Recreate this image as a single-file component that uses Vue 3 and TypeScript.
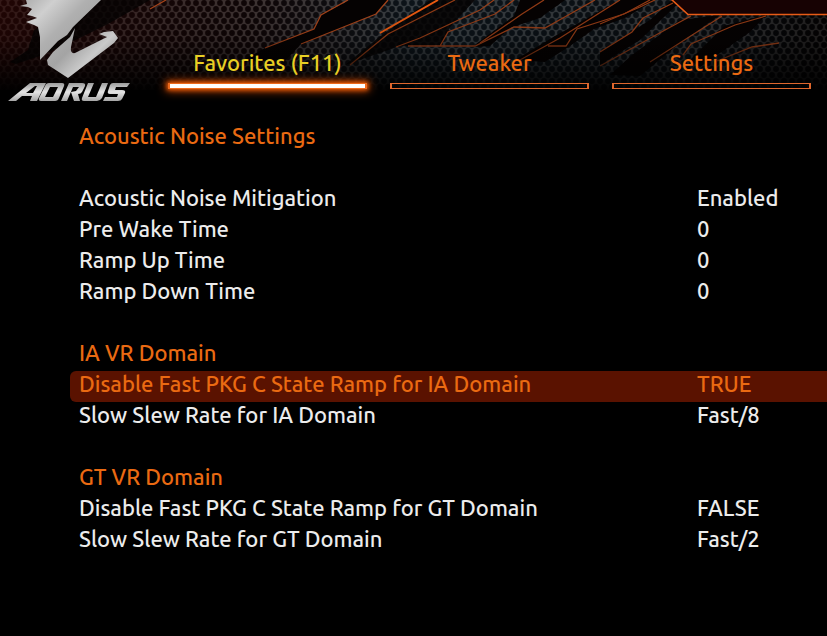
<script setup lang="ts">
import { ref } from 'vue'

interface Setting { label: string; value: string }
interface Group { title: string; spaced: boolean; items: Setting[] }

const tabs: string[] = ['Favorites (F11)', 'Tweaker', 'Settings']
const activeTab = ref<number>(0)
const selected = ref<string>('Disable Fast PKG C State Ramp for IA Domain')

const groups: Group[] = [
  {
    title: 'Acoustic Noise Settings',
    spaced: true,
    items: [
      { label: 'Acoustic Noise Mitigation', value: 'Enabled' },
      { label: 'Pre Wake Time', value: '0' },
      { label: 'Ramp Up Time', value: '0' },
      { label: 'Ramp Down Time', value: '0' },
    ],
  },
  {
    title: 'IA VR Domain',
    spaced: false,
    items: [
      { label: 'Disable Fast PKG C State Ramp for IA Domain', value: 'TRUE' },
      { label: 'Slow Slew Rate for IA Domain', value: 'Fast/8' },
    ],
  },
  {
    title: 'GT VR Domain',
    spaced: false,
    items: [
      { label: 'Disable Fast PKG C State Ramp for GT Domain', value: 'FALSE' },
      { label: 'Slow Slew Rate for GT Domain', value: 'Fast/2' },
    ],
  },
]
</script>

<template>
  <div class="bios">
    <header class="top">
      <svg class="backdrop" viewBox="0 0 827 90" preserveAspectRatio="xMidYMin slice" aria-hidden="true">
        <defs>
          <pattern id="mesh" width="8" height="12" patternUnits="userSpaceOnUse">
            <rect width="8" height="12" fill="#4a4443" />
            <g fill="#080405">
              <circle cx="4" cy="3" r="2.9" />
              <circle cx="0" cy="9" r="2.9" />
              <circle cx="8" cy="9" r="2.9" />
            </g>
          </pattern>
          <linearGradient id="tint" x1="0" y1="0" x2="1" y2="0">
            <stop offset="0" stop-color="#2a0503" stop-opacity=".7" />
            <stop offset=".3" stop-color="#1d0808" stop-opacity=".3" />
            <stop offset=".5" stop-color="#12303f" stop-opacity=".35" />
            <stop offset=".8" stop-color="#0a1a22" stop-opacity=".4" />
            <stop offset="1" stop-color="#000" stop-opacity=".55" />
          </linearGradient>
          <linearGradient id="fade" x1="0" y1="0" x2="0" y2="1">
            <stop offset="0" stop-color="#000" stop-opacity="0" />
            <stop offset=".4" stop-color="#000" stop-opacity=".12" />
            <stop offset=".75" stop-color="#000" stop-opacity=".6" />
            <stop offset="1" stop-color="#000" stop-opacity=".95" />
          </linearGradient>
        </defs>
        <rect width="827" height="90" fill="url(#mesh)" />
        <rect width="827" height="90" fill="url(#tint)" />
        <g fill="#050202">
          <path d="M10 62 28 50 34 30 90 0 150 0 108 24 84 36 40 56 16 64Z" opacity=".8" />
          <path d="M265 48 314 29 321 15 350 0 388 0 376 14 301 44 286 60 240 62Z" />
          <path d="M345 65 378 38 430 0 475 0 450 27 442 45 400 46Z" opacity=".85" />
          <path d="M472 47 514 16 520 0 565 0 540 18 510 28 490 46Z" />
          <path d="M515 60 555 36 620 0 655 0 625 18 594 29 570 46 545 62Z" />
          <path d="M610 75 632 55 680 20 720 15 680 43 640 76Z" />
          <path d="M690 60 724 26 766 15 750 32 700 67Z" />
          <path d="M600 52 650 20 672 0 682 0 640 40 600 65Z" />
        </g>
        <g fill="none" stroke="#a34218" stroke-width="1.3" opacity=".9">
          <path d="M150 9 166 0M265 48 314 29 321 15 348 0M301 44 376 14 388 0" stroke="#b64a1c" />
          <path d="M350 65 388 34 455 0M396 47 420 38 480 10 494 0" />
          <path d="M408 46 440 46 448 32 495 14 514 0M440 46 475 46 514 27 545 28 595 0" />
          <path d="M480 43 522 14 544 0M520 60 560 38 620 0M548 46 566 46 577 29 624 14 650 0" />
          <path d="M600 24 640 7 655 0M600 52 632 32 643 18 673 3M600 66 665 30 691 16M650 62 722 16M683 55 691 44 735 25 766 16M717 61 752 47 779 43" />
        </g>
        <path d="M380 33 438 0" fill="none" stroke="#ec5b11" stroke-width="2" />
        <rect width="827" height="90" fill="url(#fade)" />
        <path d="M672 0 688 14H827V0Z" fill="#170203" />
        <path d="M671 -1 688 14.5H827" fill="none" stroke="#e85b17" stroke-width="1.6" />
      </svg>

      <svg class="logo" viewBox="0 0 140 108" role="img" aria-label="AORUS">
        <defs>
          <linearGradient id="steel" x1="20" y1="0" x2="100" y2="80" gradientUnits="userSpaceOnUse">
            <stop offset="0" stop-color="#a9a9a9" />
            <stop offset=".22" stop-color="#cfcfcf" />
            <stop offset=".42" stop-color="#b0b0b0" />
            <stop offset=".62" stop-color="#a4a4a4" />
            <stop offset=".8" stop-color="#cacaca" />
            <stop offset="1" stop-color="#8c8c8c" />
          </linearGradient>
          <linearGradient id="chrome" x1="0" y1="83" x2="0" y2="101" gradientUnits="userSpaceOnUse">
            <stop offset="0" stop-color="#9c9c9c" />
            <stop offset=".5" stop-color="#e4e4e4" />
            <stop offset="1" stop-color="#a6a6a6" />
          </linearGradient>
        </defs>
        <g fill="url(#steel)">
          <path d="M26 0H101L73 27 67 35 58 41 40 60V37L38 27 34 25 26 22 37 18 32 16 27 15 32 9 28 7 20 6 27 4Z" />
          <path d="M75 28 71 47Q70 54 75 53L107 37 99 34 104 32 113 31 118 38 114 43 68 78 48 65 47 60 53 52 70 37Z" />
        </g>
        <g fill="url(#chrome)" fill-rule="evenodd">
          <path d="M8 101 30 83H46L37 101H30L32 96H22L16 101ZM26 93H33L37 86H35Z" />
          <path d="M45 86Q46 83 49 83H62Q65 83 64 86L59 98Q58 101 55 101H41Q38 101 39 98ZM50 87 45 97H53L58 87Z" />
          <path d="M69 83H82Q86 83 85 86L82 92Q81 94 78 94L80 101H74L71 92 76 91 79 87H73L67 101H61Z" />
          <path d="M88 83H94L88 97H96L102 83H108L102 98Q100 101 97 101H84Q81 101 82 98Z" />
          <path d="M113 83H130L127 87H116L115 90H122Q126 90 125 93L122 99Q121 101 118 101H103L105 97H117L118 94H110Q107 94 108 91L110 85Q111 83 113 83Z" />
        </g>
      </svg>

      <nav class="tabs" aria-label="Sections">
        <button
          v-for="(tab, i) in tabs"
          :key="tab"
          type="button"
          class="tab"
          :class="{ active: activeTab === i }"
          @click="activeTab = i"
        >
          <span>{{ tab }}</span>
          <span class="bar"></span>
        </button>
      </nav>
    </header>

    <main class="content">
      <section v-for="group in groups" :key="group.title" class="group" :class="{ spaced: group.spaced }">
        <h2>{{ group.title }}</h2>
        <dl>
          <div
            v-for="item in group.items"
            :key="item.label"
            class="row"
            :class="{ selected: selected === item.label }"
            @click="selected = item.label"
          >
            <dt>{{ item.label }}</dt>
            <dd>{{ item.value }}</dd>
          </div>
        </dl>
      </section>
    </main>
  </div>
</template>

<style>
body {
  background: #000;
}
</style>

<style scoped>
.bios {
  min-height: 100vh;
  overflow: hidden;
  background: #000;
  color: #ececec;
  font-family: Ubuntu, "Noto Sans", sans-serif;
  font-size: 22px;
  font-weight: 500;
  line-height: 25px;
}
.top {
  position: relative;
  display: grid;
  grid-template-columns: 140px 1fr;
  column-gap: 28px;
  padding-right: 16px;
}
.backdrop {
  position: absolute;
  inset: 0;
  width: 100%;
  height: 90px;
}
.logo {
  position: relative;
  width: 140px;
  height: 108px;
}
.tabs {
  position: relative;
  display: grid;
  grid-template-columns: repeat(3, 1fr);
  column-gap: 23px;
  align-content: start;
  padding-top: 50px;
}
.tab {
  display: flex;
  flex-direction: column;
  gap: 8px;
  padding: 0;
  border: 0;
  background: none;
  color: #ea6a12;
  font: inherit;
  text-align: center;
  cursor: pointer;
}
.bar {
  box-sizing: border-box;
  height: 6px;
  border: 1px solid #e0672d;
  border-width: 1px 2px;
}
.tab.active {
  color: #e8cf24;
}
.tab.active .bar {
  background: #fff;
  border-color: #ee6a1c;
  box-shadow: 0 0 4px 1px #e85a08, 0 0 10px 2px #b84000;
}
.content {
  padding: 15px 0 0 70px;
}
.group {
  margin-bottom: 31px;
}
.spaced h2 {
  margin-bottom: 31px;
}
h2 {
  margin: 0;
  padding: 0 0 6px 9px;
  color: #ea6a12;
  font: inherit;
}
dl,
dd {
  margin: 0;
}
.row {
  display: grid;
  grid-template-columns: 1fr 130px;
  padding: 0 0 6px 9px;
  border-radius: 6px 0 0 6px;
  cursor: pointer;
}
.row.selected {
  background: #5a1200;
  color: #ea6a12;
}
</style>
